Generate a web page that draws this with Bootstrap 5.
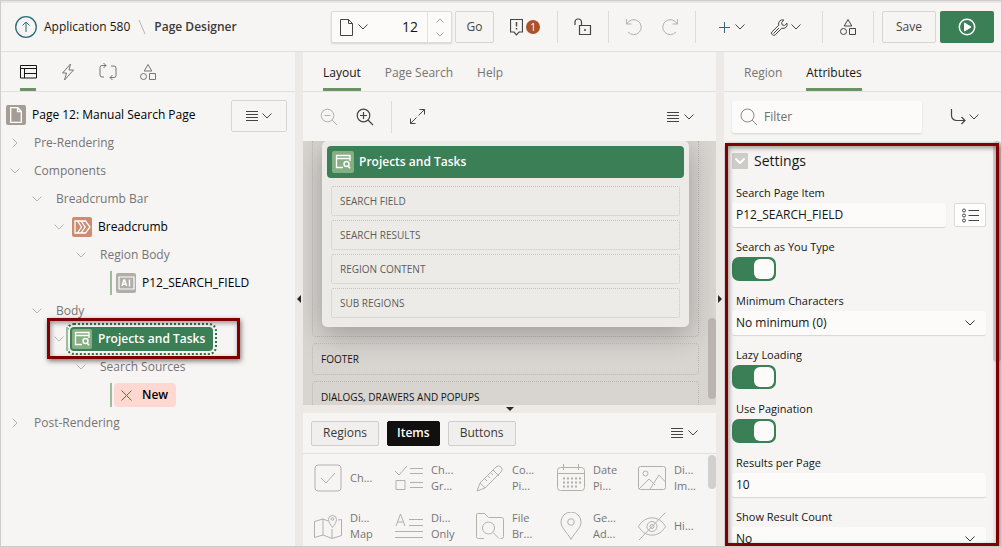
<!DOCTYPE html>
<html lang="en">
<head>
<meta charset="utf-8">
<meta name="viewport" content="width=device-width, initial-scale=1">
<title>Page Designer</title>
<link rel="stylesheet" href="https://cdn.jsdelivr.net/npm/bootstrap@5.3.0/dist/css/bootstrap.min.css">
<style>
:root{--line:#e3e1de;--pane:#f6f5f4;--green:#3a7f55;--accent:#6b9464;--muted:#777472;--ink:#161513;--mark:#7f0000}
body{font-family:"Open Sans","Noto Sans",sans-serif;font-size:12px;line-height:16px;color:var(--ink);background:var(--pane)}
svg{fill:none;stroke:currentColor;stroke-width:1;display:block;flex:none}
.shell{height:100vh;border:1px solid #cfcdcb;box-shadow:inset 0 2px 0 #e9e7e5;padding-top:2px;overflow:hidden}
button,.plain-link{color:#444;font-size:12px;line-height:16px}
.plain-link{text-decoration:none;color:var(--ink);gap:7px;white-space:nowrap}
.i12{width:12px;height:12px}.i18{width:18px;height:18px}.i20{width:20px;height:20px}.i28{width:28px;height:28px}
.i-doc{width:13px;height:17px}.i-wide{width:17px;height:14px}.i-17{width:17px;height:17px}.i-11{width:11px;height:11px}.i-16{width:16px;height:16px}.i-15{width:15px;height:15px}
.i-step{width:8px;height:5px}.i-next{width:6px;height:10px}.i-bolt{width:14px;height:18px}.i-page{width:12px;height:16px}.i-list{width:17px;height:15px}
.flip-x{transform:scaleX(-1)}.flip-y{transform:scaleY(-1)}
.chev{width:10px;height:6px}
.ghost{border:0;background:none;padding:0;display:inline-flex;align-items:center;justify-content:center;gap:5px}
.ghost.tight{gap:3px}
.dim{color:#b3b0ad}
.min-h0{min-height:0}
/* header */
.topbar{height:49px;border-bottom:1px solid var(--line);padding:0 7px 0 14px}
.topbar>*{flex-shrink:0}
.up-ring{width:22px;height:22px;color:#2c6a78}
.crumb-slash{width:8px;height:16px;color:#b9b6b3}
.here{font-weight:600;color:#3b3937;white-space:nowrap}
.tall-rule{width:1px;height:32px;background:#dddad7;flex:none}
.page-pick{width:121px;height:32px;background:#fcfbfa;border:1px solid #dddad7;border-radius:2px;box-shadow:0 1px 2px #0002}
.page-pick input{width:44px;border:0;background:none;padding:0 9px 0 0;text-align:right;font-size:14px;color:var(--ink)}
.spin{width:24px;border-left:1px solid #dddad7;color:#8b8886;gap:9px}
.boxed{border:1px solid #d8d5d2;border-radius:2px;background:var(--pane);height:32px;padding:0}
.btn-go{width:39px;margin-left:3px}.slot-54{width:54px}.slot-50{width:50px}.slot-36{width:36px}.slot-63{width:63px}.slot-56{width:56px}
.pair{display:flex;padding:0 7px}
.pair.wide{padding:0 9px}
.run-btn{background:var(--green);border:0;color:#fff}
.count-dot{width:14px;height:14px;border-radius:50%;background:#ac5128;color:#fff;font-size:10px;line-height:14px}
/* main columns */
.panes{display:grid;grid-template-columns:minmax(0,294fr) 8px minmax(0,413fr) 8px minmax(0,277fr);min-height:0}
.split{background:#ece9e6}
.split-row{height:8px}
.grip{width:0;height:0;border:4px solid transparent}
.grip-l{border-right-color:#2b2927;border-left-width:0}
.grip-r{border-left-color:#2b2927;border-right-width:0}
.grip-d{border-top-color:#2b2927;border-bottom-width:0}
.tabstrip{height:40px;border-bottom:1px solid var(--line);padding:0 20px;flex:none}
.tabstrip button{border:0;border-bottom:3px solid transparent;background:none;padding:5px 0 0;color:var(--muted)}
.tabstrip button.on{color:var(--ink);border-color:var(--accent)}
.tabstrip.icons{gap:24px;padding:0 19px}
.tabstrip.icons button{width:16px;padding-top:3px;display:flex;align-items:center;justify-content:center}
.toolrow{height:49px}
/* tree */
.tree{list-style:none;margin:0;padding:9px 0 0 3px;color:var(--muted);min-width:0}
.tree li{height:28px;white-space:nowrap}
.twist{width:22px;display:flex;justify-content:center;margin-right:8px;color:#b7b4b1;flex:none}
.twist.near{margin-right:0}
.lv1{padding-left:22px}.lv2{padding-left:44px}.lv3{padding-left:66px}.lv4{padding-left:88px}
.chip{height:24px;display:flex;align-items:center;gap:6px;padding:0 8px 0 2px;border-radius:4px;color:#000;position:relative}
.chip.bar::before{content:"";position:absolute;left:-4px;top:0;width:2px;height:24px;background:#9dbd9a}
.chip.picked{background:var(--green);color:#fff;font-weight:600;outline:2px dotted #2f7049;outline-offset:2px}
.chip.broken{background:#ffd8d2;font-weight:600}
.tile{width:20px;height:20px;border-radius:2px;color:#fff;display:flex;align-items:center;justify-content:center;flex:none}
.t-page{background:#a49c95}.t-crumb{background:#cb8d70}.t-text{background:#b1ada8}.t-region{background:#86ae83}.t-bad{color:#c74634}
.callout{position:absolute;border:3px solid var(--mark);box-shadow:1px 2px 5px #0008,inset 1px 2px 5px #0006;pointer-events:none;z-index:3}
.callout-node{left:43px;width:193px;top:-7px;height:41px}
.callout-panel{inset:2px 2px 0 1px}
/* layout canvas */
.canvas{background:#d8d4d0;padding:0 17px 0 9px}
.zone{border:1px dotted #bab5b1;border-radius:4px}
.zone-body{border-top:0;border-radius:0 0 4px 4px;padding:0 9px 9px;margin-bottom:6px}
.zone-name{height:32px;padding:7px 8px;font-size:10px;font-weight:500;margin-bottom:6px}
.region-box{background:#ecebe7;border-radius:5px;padding:5px 5px 9px;box-shadow:0 8px 28px #0004}
.region-head{background:var(--green);color:#fff;font-weight:600;height:32px;border-radius:4px;padding:0 5px;margin-bottom:8px;gap:5px}
.region-head .tile{width:22px;height:22px}
.slot{height:30px;border:1px dotted #c8c5c1;border-radius:2px;margin:0 4px 4px;padding:6px 8px;font-size:10px;color:#5e5c5a}
.slot:last-child{margin-bottom:0}
.thumb{position:absolute;right:0;width:8px;border-radius:4px;background:#b9b4b0}
.thumb-canvas{top:177px;height:81px}
.thumb-gallery{top:1px;height:34px;background:#d2d0ce}
.thumb-props{top:0;height:221px;background:#d4d2cf}
/* gallery */
.gallery{height:133px}
.gal-head{height:41px;border-bottom:1px solid var(--line);padding:0 18px 0 8px}
.gal-head .pill{height:25px;padding:0 11px;border:1px solid #d0cdca;border-radius:2px;background:#f1efed;color:#3b3937}
.gal-head .pill.on{background:#12100e;color:#fff;border-color:#12100e;font-weight:600;padding:0 9px}
.gal-grid{display:grid;grid-template-columns:repeat(5,minmax(81px,1fr));grid-auto-rows:48px;padding:0 0 0 11px;font-size:11px;color:var(--muted);flex:1;min-height:0;overflow:hidden}
.gal-grid svg{color:#b5afaa}
/* properties */
.field{margin-bottom:10px}
.field label{display:block;font-size:11px;line-height:20px;padding-left:4px}
.txt{height:24px;border:0;border-radius:2px;background-color:#fcfbfa;box-shadow:0 1px 1px #0002;padding:0 4px;font-size:12px;line-height:24px;width:100%;color:var(--ink)}
select.txt{appearance:none;background-image:url("data:image/svg+xml,%3Csvg xmlns='http://www.w3.org/2000/svg' viewBox='0 0 10 6'%3E%3Cpath d='M.5.5 5 5 9.5.5' fill='none' stroke='%23333'/%3E%3C/svg%3E");background-repeat:no-repeat;background-size:10px 6px;background-position:right 11px center}
.search-wrap{height:32px;width:190px;background:#fcfbfa;border-radius:2px;box-shadow:0 1px 2px #0002;padding:0 8px;gap:6px;color:#8b8886}
.search-wrap input{border:0;background:none;padding:0;min-width:0;width:100%;font-size:12px;outline:0}
.search-wrap input::placeholder{color:#6f6c6a}
.goto{margin-right:14px}
.menu-mid{margin-right:22px}
.toggle{appearance:none;display:block;width:44px;height:24px;border-radius:7px;background:#c9c6c3;margin:0;position:relative}
.toggle:checked{background:var(--green)}
.toggle::before{content:"";position:absolute;right:2px;top:2px;width:20px;height:20px;border-radius:6px;background:#fcfbfa}
.list-btn{width:32px;height:24px;background:#fff;border:1px solid #dddad7;border-radius:2px;padding:0}
.group-bar{gap:6px;margin-bottom:12px}
.fold{width:16px;height:16px;border:0;border-radius:1px;background:#cfccc8;color:#fff;padding:0}
.fold svg{stroke-width:2}
.group-title{font-size:14px;line-height:20px;font-weight:500;margin:0}
.props{padding:10px 15px 0 8px}
</style>
</head>
<body>
<svg width="0" height="0" class="position-absolute">
  <symbol id="chev" viewBox="0 0 10 6"><path d="M.5.5 5 5 9.5.5"/></symbol>
  <symbol id="menu" viewBox="0 0 12 12"><path d="M0 1.500h12M0 4.500h12M0 7.500h12M0 10.500h12"/></symbol>
  <symbol id="shapes" viewBox="0 0 18 18"><path d="M9 1.500 12.800 8H5.200z"/><circle cx="4.500" cy="13.500" r="3"/><path d="M10.500 10.500h6v6h-6z"/></symbol>
  <symbol id="reg" viewBox="0 0 20 20"><path d="M10 15.500H3.500v-12h13.500V9M3.500 6.500H17" stroke-width="1.300"/><circle cx="13.500" cy="12" r="2.500" stroke-width="1.400"/><path d="m15 14 2 2.300" stroke-width="1.600"/></symbol>
  <symbol id="undo" viewBox="0 0 18 18"><path d="M1.500 1v5h5M2 5.800A7.500 7.500 0 1 1 3 14"/></symbol>
</svg>
<div class="shell d-flex flex-column">
  <header class="topbar d-flex align-items-center flex-shrink-0">
    <nav class="d-flex align-items-center gap-2 flex-grow-1" aria-label="Breadcrumb">
      <a class="plain-link d-flex align-items-center" href="#"><svg class="up-ring" viewBox="0 0 22 22"><circle cx="11" cy="11" r="10.300" stroke-width="1.300"/><path d="M11 16V6M7.500 9.500 11 6l3.500 3.500"/></svg>Application 580</a>
      <svg class="crumb-slash" viewBox="0 0 8 16"><path d="m1 1 6 14"/></svg>
      <span class="here">Page Designer</span>
    </nav>
    <div class="page-pick d-flex">
      <button class="ghost ps-2" aria-label="Choose page"><svg class="i-doc" viewBox="0 0 13 17"><path d="M.5.5h8l4 4v12H.5zM8.500.5v4h4"/></svg><svg class="chev"><use href="#chev"/></svg></button>
      <input class="ms-auto" aria-label="Page number" value="12">
      <button class="ghost spin border-start flex-column" aria-label="Next page"><svg class="i-step flip-y" viewBox="0 0 10 6"><use href="#chev"/></svg><svg class="i-step" viewBox="0 0 10 6"><use href="#chev"/></svg></button>
    </div>
    <button class="boxed btn-go">Go</button>
    <button class="ghost tight slot-63 justify-content-start ps-3" aria-label="Messages"><svg class="i-doc" viewBox="0 0 13 17"><path d="M.5.5h12v12.500H9L6.500 15.800 4 13H.5z" stroke-width="1.200"/><path d="M6.500 3v4.500M6.500 9v1.500" stroke-width="1.400"/></svg><span class="count-dot">1</span></button>
    <span class="tall-rule"></span>
    <button class="ghost slot-50" aria-label="Lock page"><svg class="i18" viewBox="0 0 18 18"><path d="M5.500 7.500h11v9h-11zM7.500 7.500V4a3 3 0 0 0-3-3h-.5a3 3 0 0 0-3 3v3" stroke-width="1.200"/><path d="M11 11v2" stroke-width="1.500"/></svg></button>
    <span class="tall-rule"></span>
    <span class="pair"><button class="ghost slot-36 dim" aria-label="Undo"><svg class="i18"><use href="#undo"/></svg></button><button class="ghost slot-36 dim" aria-label="Redo"><svg class="i18 flip-x"><use href="#undo"/></svg></button></span>
    <span class="tall-rule"></span>
    <span class="pair wide"><button class="ghost slot-54" aria-label="Create"><svg class="i-11" viewBox="0 0 11 11"><path d="M5.500 0v11M0 5.500h11" stroke="#2c6a78"/></svg><svg class="chev"><use href="#chev"/></svg></button><button class="ghost tight slot-54" aria-label="Utilities"><svg class="i-17" viewBox="0 0 17 17"><path d="M12.800 1a4 4 0 0 0-5 5.200L1 12.800a1.800 1.800 0 0 0 0 2.500l.6.6a1.800 1.800 0 0 0 2.500 0l6.700-6.700a4 4 0 0 0 5.200-5l-2.500 2.300-2.300-.6-.6-2.300zM2.500 14.500 8 9"/></svg><svg class="chev"><use href="#chev"/></svg></button></span>
    <span class="tall-rule"></span>
    <button class="ghost slot-50" aria-label="Shared components"><svg class="i18"><use href="#shapes"/></svg></button>
    <span class="tall-rule me-2"></span>
    <button class="boxed slot-54 me-1">Save</button>
    <button class="boxed run-btn slot-54 d-flex align-items-center justify-content-center" aria-label="Run page"><svg class="i18" viewBox="0 0 18 18"><circle cx="9" cy="9" r="7.700" stroke-width="1.500"/><path d="M6.500 5v8L13 9z" fill="#fff"/></svg></button>
  </header>

  <main class="panes flex-grow-1">
    <section class="d-flex flex-column min-h0">
      <div class="tabstrip icons d-flex">
        <button class="on" aria-label="Rendering"><svg class="i-wide" viewBox="0 0 17 14"><path d="M.5.5h16v12.500H.5zM.5 3.500h16M4.500 3.500V13M4.500 8.500h12"/></svg></button>
        <button aria-label="Dynamic actions"><svg class="i-bolt" viewBox="0 0 14 18"><path d="M9.500 1 1.500 10h4L3.500 17l9-10H8z"/></svg></button>
        <button aria-label="Processing"><svg class="i18" viewBox="0 0 18 18"><path d="M7 2.500H3a2 2 0 0 0-2 2V12a2 2 0 0 0 2 2h2M4.500 0 7 2.500 4.500 5M11 14.500h4a2 2 0 0 0 2-2V5a2 2 0 0 0-2-2h-3M13.500 12 11 14.500l2.500 2.500"/></svg></button>
        <button aria-label="Shared components"><svg class="i18"><use href="#shapes"/></svg></button>
      </div>
      <div class="d-flex">
        <ul class="tree flex-grow-1">
          <li class="d-flex align-items-center"><span class="chip"><span class="tile t-page"><svg class="i-page" viewBox="0 0 12 16"><path d="M.7.7h7l3.600 3.600v11H.7zM7.500.7v3.800h3.800" stroke-width="1.300"/></svg></span>Page 12: Manual Search Page</span></li>
          <li class="d-flex align-items-center"><span class="twist"><svg class="i-next" viewBox="0 0 6 10"><path d="M.5.5 5 5 .5 9.500"/></svg></span>Pre-Rendering</li>
          <li class="d-flex align-items-center"><span class="twist"><svg class="chev"><use href="#chev"/></svg></span>Components</li>
          <li class="d-flex align-items-center lv1"><span class="twist"><svg class="chev"><use href="#chev"/></svg></span>Breadcrumb Bar</li>
          <li class="d-flex align-items-center lv2"><span class="twist near"><svg class="chev"><use href="#chev"/></svg></span><span class="chip"><span class="tile t-crumb"><svg class="i-wide" viewBox="0 0 17 14"><path d="M1 1h10.500L16 7l-4.500 6H1zM3.500 1 7.500 7l-4 6M7 1l4.200 6L7 13" stroke-width="1.300"/></svg></span>Breadcrumb</span></li>
          <li class="d-flex align-items-center lv3"><span class="twist"><svg class="chev"><use href="#chev"/></svg></span>Region Body</li>
          <li class="d-flex align-items-center lv4"><span class="twist near"></span><span class="chip bar"><span class="tile t-text"><svg class="i-wide" viewBox="0 0 17 14"><path d="M1 1h15v12H1z" stroke-width="1.200"/><path d="m4 10 2-6h.6l2 6M4.700 8.200h3.200M11.500 3.500v7" stroke-width="1.400"/></svg></span>P12_SEARCH_FIELD</span></li>
          <li class="d-flex align-items-center lv1"><span class="twist"><svg class="chev"><use href="#chev"/></svg></span>Body</li>
          <li class="d-flex align-items-center lv2 position-relative"><span class="twist near"><svg class="chev"><use href="#chev"/></svg></span><span class="chip bar picked"><span class="tile t-region"><svg class="i20"><use href="#reg"/></svg></span>Projects and Tasks</span><span class="callout callout-node"></span></li>
          <li class="d-flex align-items-center lv3"><span class="twist"><svg class="chev"><use href="#chev"/></svg></span>Search Sources</li>
          <li class="d-flex align-items-center lv4"><span class="twist near"></span><span class="chip bar broken"><span class="tile t-bad"><svg class="i-11" viewBox="0 0 11 11"><path d="m.5.5 10 10M10.500.5l-10 10"/></svg></span>New</span></li>
          <li class="d-flex align-items-center"><span class="twist"><svg class="i-next" viewBox="0 0 6 10"><path d="M.5.5 5 5 .5 9.500"/></svg></span>Post-Rendering</li>
        </ul>
        <button class="boxed slot-56 d-flex align-items-center justify-content-center gap-1 flex-shrink-0 mt-2 me-2" aria-label="Tree menu"><svg class="i12"><use href="#menu"/></svg><svg class="chev"><use href="#chev"/></svg></button>
      </div>
    </section>

    <div class="split d-flex align-items-center justify-content-center"><span class="grip grip-l"></span></div>

    <section class="d-flex flex-column min-h0">
      <div class="tabstrip d-flex gap-4"><button class="on">Layout</button><button>Page Search</button><button>Help</button></div>
      <div class="toolrow d-flex align-items-center flex-shrink-0 ps-2">
        <button class="ghost slot-36 dim" aria-label="Zoom out"><svg class="i18" viewBox="0 0 18 18"><circle cx="7.500" cy="7.500" r="6.300"/><path d="M12 12l5 5M4.500 7.500h6"/></svg></button>
        <button class="ghost slot-36" aria-label="Zoom in"><svg class="i18" viewBox="0 0 18 18"><circle cx="7.500" cy="7.500" r="6.300" stroke-width="1.200"/><path d="M12 12l5 5M4 7.500h7M7.500 4v7" stroke-width="1.200"/></svg></button>
        <span class="tall-rule ms-2"></span>
        <button class="ghost slot-50" aria-label="Expand"><svg class="i-15" viewBox="0 0 15 15"><path d="M9.500.5h5v5M14.500.5 8.500 6.500M.5 9.500v5h5M.5 14.500l6-6"/></svg></button>
        <button class="ghost menu-mid ms-auto" aria-label="Layout menu"><svg class="i12"><use href="#menu"/></svg><svg class="chev"><use href="#chev"/></svg></button>
      </div>
      <div class="canvas flex-grow-1 position-relative overflow-hidden min-h0">
        <div class="zone zone-body">
          <div class="region-box">
            <div class="region-head d-flex align-items-center"><span class="tile t-region"><svg class="i20"><use href="#reg"/></svg></span>Projects and Tasks</div>
            <div class="slot">SEARCH FIELD</div><div class="slot">SEARCH RESULTS</div><div class="slot">REGION CONTENT</div><div class="slot">SUB REGIONS</div>
          </div>
        </div>
        <div class="zone zone-name">FOOTER</div>
        <div class="zone zone-name">DIALOGS, DRAWERS AND POPUPS</div>
        <span class="thumb thumb-canvas"></span>
      </div>
      <div class="split split-row d-flex align-items-center justify-content-center flex-shrink-0"><span class="grip grip-d"></span></div>
      <div class="gallery d-flex flex-column flex-shrink-0">
        <div class="gal-head d-flex align-items-center gap-2 flex-shrink-0"><button class="pill">Regions</button><button class="pill on">Items</button><button class="pill">Buttons</button><button class="ghost ms-auto" aria-label="Gallery menu"><svg class="i12"><use href="#menu"/></svg><svg class="chev"><use href="#chev"/></svg></button></div>
        <div class="gal-grid position-relative">
          <span class="d-flex align-items-center gap-2"><svg class="i28" viewBox="0 0 28 28"><rect x="1" y="1" width="26" height="26" rx="3"/><path d="m7 14 5 5 9-10"/></svg>Ch...</span>
          <span class="d-flex align-items-center gap-2"><svg class="i28" viewBox="0 0 28 28"><path d="m0 7 4 4L12 2M15 4.500h13M15 9.500h13M1 16.500h9v9H1zM15 18.500h13M15 23.500h13"/></svg>Ch...<br>Gr...</span>
          <span class="d-flex align-items-center gap-2"><svg class="i28" viewBox="0 0 28 28"><path d="M1 27l3-8L20 3a3.500 3.500 0 0 1 5 5L9 24zM4 19l5 5M17 6l6 6M15 9l2 2M12 12l2 2M9 15l2 2"/></svg>Co...<br>Pi...</span>
          <span class="d-flex align-items-center gap-2"><svg class="i28" viewBox="0 0 28 28"><rect x=".5" y="3.500" width="27" height="23" rx="3"/><path d="M.5 9.500h27M6.500 0v6M21.500 0v6"/><path d="M6 14.500h18M6 18.500h18M6 22.500h14" stroke-width="2" stroke-dasharray="2 2"/></svg>Date<br>Pi...</span>
          <span class="d-flex align-items-center gap-2"><svg class="i28" viewBox="0 0 28 28"><rect x=".5" y="2.500" width="27" height="23" rx="2"/><circle cx="7.500" cy="9.500" r="2.500"/><path d="m1 25 10-10 6 6M12 25l9-14 6.500 7"/></svg>Di...<br>Im...</span>
          <span class="d-flex align-items-center gap-2"><svg class="i28" viewBox="0 0 28 28"><path d="M14 9 9 7 .5 9.500v16L9 23l9 3.500 9.500-3v-16L24 8M9 7v16M18 17v9.500"/><path d="M18.500 15.500c-2-3-4-5-4-8a4 4 0 0 1 8 0c0 3-2 5-4 8z"/><circle cx="18.500" cy="7" r="1.300"/></svg>Di...<br>Map</span>
          <span class="d-flex align-items-center gap-2"><svg class="i28" viewBox="0 0 28 28"><path d="m1 14 4.500-12L10 14M2.500 10h6M14 7.500h14M14 13.500h14M0 19.500h28M0 25.500h28"/></svg>Di...<br>Only</span>
          <span class="d-flex align-items-center gap-2"><svg class="i28" viewBox="0 0 28 28"><path d="M8 26.500H2.500a2 2 0 0 1-2-2v-22a1 1 0 0 1 1-1h7l4 4h13a2 2 0 0 1 2 2v17a2 2 0 0 1-2 2h-1"/><circle cx="12.500" cy="16" r="6"/><path d="m17 20.500 6 6"/></svg>File<br>Br...</span>
          <span class="d-flex align-items-center gap-2"><svg class="i28" viewBox="0 0 28 28"><path d="M14 27.500C10 20 4 16 4 10a10 10 0 0 1 20 0c0 6-6 10-10 17.500z"/><circle cx="14" cy="10" r="3.300"/></svg>Ge...<br>Ad...</span>
          <span class="d-flex align-items-center gap-2"><svg class="i28" viewBox="0 0 28 28"><path d="M.5 14.500C7 3 21 3 27.500 14.500 21 26 7 26 .5 14.500zM1 28 27.500.5"/><circle cx="14" cy="14.500" r="5"/><circle cx="14" cy="14.500" r="2"/></svg>Hi...</span>
          <span class="thumb thumb-gallery"></span>
        </div>
      </div>
    </section>

    <div class="split d-flex align-items-center justify-content-center"><span class="grip grip-r"></span></div>

    <section class="d-flex flex-column min-h0">
      <div class="tabstrip d-flex gap-4"><button>Region</button><button class="on">Attributes</button></div>
      <div class="toolrow d-flex align-items-center flex-shrink-0 px-2">
        <label class="search-wrap d-flex align-items-center"><svg class="i18" viewBox="0 0 18 18"><circle cx="7.500" cy="7.500" r="6.500"/><path d="M12 12l5 5"/></svg><input type="search" placeholder="Filter" aria-label="Filter"></label>
        <button class="ghost tight goto ms-auto" aria-label="Go to group"><svg class="i-16" viewBox="0 0 16 16"><path d="M1.500 0v6.500a5 5 0 0 0 5 5H15M11.500 8l3.500 3.500-3.500 3.500" stroke-width="1.200"/></svg><svg class="chev"><use href="#chev"/></svg></button>
      </div>
      <div class="flex-grow-1 position-relative overflow-hidden min-h0">
        <span class="thumb thumb-props"></span>
        <form class="props">
          <div class="group-bar d-flex align-items-center"><button type="button" class="fold d-flex align-items-center justify-content-center" aria-label="Collapse"><svg class="chev"><use href="#chev"/></svg></button><h2 class="group-title">Settings</h2></div>
          <div class="field"><label for="f1">Search Page Item</label><div class="d-flex gap-2"><input id="f1" class="txt" value="P12_SEARCH_FIELD"><button type="button" class="list-btn d-flex align-items-center justify-content-center flex-shrink-0" aria-label="Pick item"><svg class="i-list" viewBox="0 0 17 15"><circle cx="2" cy="2.500" r="1.500"/><circle cx="2" cy="7.500" r="1.500"/><circle cx="2" cy="12.500" r="1.500"/><path d="M6.500 2.500H17M6.500 7.500H17M6.500 12.500H17"/></svg></button></div></div>
          <div class="field"><label for="f2">Search as You Type</label><input id="f2" type="checkbox" role="switch" class="toggle" checked></div>
          <div class="field"><label for="f3">Minimum Characters</label><select id="f3" class="txt"><option>No minimum (0)</option></select></div>
          <div class="field"><label for="f4">Lazy Loading</label><input id="f4" type="checkbox" role="switch" class="toggle" checked></div>
          <div class="field"><label for="f5">Use Pagination</label><input id="f5" type="checkbox" role="switch" class="toggle" checked></div>
          <div class="field"><label for="f6">Results per Page</label><input id="f6" class="txt" value="10"></div>
          <div class="field"><label for="f7">Show Result Count</label><select id="f7" class="txt"><option>No</option></select></div>
        </form>
        <span class="callout callout-panel"></span>
      </div>
    </section>
  </main>
</div>
<script src="https://cdn.jsdelivr.net/npm/bootstrap@5.3.0/dist/js/bootstrap.bundle.min.js"></script>
</body>
</html>
